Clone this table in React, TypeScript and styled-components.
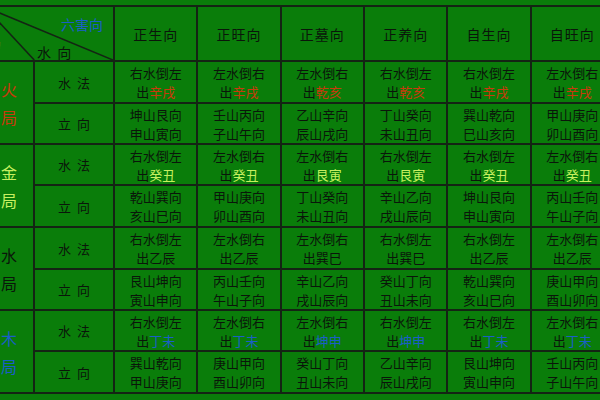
import React from "react";
import styled, { createGlobalStyle } from "styled-components";

type Tone = "fire" | "metal" | "water" | "wood";

type Group = {
  name: [string, string];
  tone: Tone;
  exits: string[];
  mounts: [string, string][];
};

const toneColor: Record<Tone, string> = {
  fire: "#c83a0c",
  metal: "#c8f060",
  water: "#0a160a",
  wood: "#1a5ec8",
};

const heads = ["正生向", "正旺向", "正墓向", "正养向", "自生向", "自旺向"];
const flow = ["右水倒左", "左水倒右", "左水倒右", "右水倒左", "右水倒左", "左水倒右"];

const groups: Group[] = [
  {
    name: ["火", "局"],
    tone: "fire",
    exits: ["辛戌", "辛戌", "乾亥", "乾亥", "辛戌", "辛戌"],
    mounts: [
      ["坤山艮向", "申山寅向"],
      ["壬山丙向", "子山午向"],
      ["乙山辛向", "辰山戌向"],
      ["丁山癸向", "未山丑向"],
      ["巽山乾向", "巳山亥向"],
      ["甲山庚向", "卯山酉向"],
    ],
  },
  {
    name: ["金", "局"],
    tone: "metal",
    exits: ["癸丑", "癸丑", "艮寅", "艮寅", "癸丑", "癸丑"],
    mounts: [
      ["乾山巽向", "亥山巳向"],
      ["甲山庚向", "卯山酉向"],
      ["丁山癸向", "未山丑向"],
      ["辛山乙向", "戌山辰向"],
      ["坤山艮向", "申山寅向"],
      ["丙山壬向", "午山子向"],
    ],
  },
  {
    name: ["水", "局"],
    tone: "water",
    exits: ["乙辰", "乙辰", "巽巳", "巽巳", "乙辰", "乙辰"],
    mounts: [
      ["艮山坤向", "寅山申向"],
      ["丙山壬向", "午山子向"],
      ["辛山乙向", "戌山辰向"],
      ["癸山丁向", "丑山未向"],
      ["乾山巽向", "亥山巳向"],
      ["庚山甲向", "酉山卯向"],
    ],
  },
  {
    name: ["木", "局"],
    tone: "wood",
    exits: ["丁未", "丁未", "坤申", "坤申", "丁未", "丁未"],
    mounts: [
      ["巽山乾向", "甲山庚向"],
      ["庚山甲向", "酉山卯向"],
      ["癸山丁向", "丑山未向"],
      ["乙山辛向", "辰山戌向"],
      ["艮山坤向", "寅山申向"],
      ["壬山丙向", "子山午向"],
    ],
  },
];

const GlobalStyle = createGlobalStyle`
  html, body {
    margin: 0;
    padding: 0;
    width: 600px;
    height: 400px;
    overflow: hidden;
    background: #0a7d0a;
  }
`;

const Page = styled.div`
  width: 600px;
  height: 400px;
  overflow: hidden;
  padding-top: 5px;
  box-sizing: border-box;
  font-family: "Noto Sans CJK SC", "Noto Sans", sans-serif;
`;

const Table = styled.table`
  margin-left: -17px;
  border-collapse: collapse;
  table-layout: fixed;
  width: 630px;
  background: #0a7d0a;
  color: #0a160a;

  td, th {
    border: 2px solid #142414;
    padding: 0;
    text-align: center;
    vertical-align: middle;
    font-weight: normal;
  }
`;

const HeadRow = styled.tr`
  height: 55px;
`;

const BodyRow = styled.tr<{ tall: boolean }>`
  height: ${({ tall }) => (tall ? "42px" : "41px")};
`;

const Corner = styled.th`
  position: relative;
  overflow: hidden;
`;

const Lines = styled.svg`
  position: absolute;
  inset: 0;
  width: 100%;
  height: 100%;
`;

const CornerText = styled.span<{ x: number; y: number; color: string }>`
  position: absolute;
  left: ${({ x }) => x}px;
  top: ${({ y }) => y}px;
  font-size: 14px;
  line-height: 14px;
  color: ${({ color }) => color};
  white-space: pre;
`;

const Head = styled.th`
  font-size: 14px;
  color: #0a160a;
  letter-spacing: 1px;
`;

const GroupName = styled.td<{ tone: Tone }>`
  font-size: 16px;
  line-height: 28px;
  color: ${({ tone }) => toneColor[tone]};
`;

const Kind = styled.td`
  font-size: 13px;
  white-space: pre;
`;

const Cell = styled.td`
  font-size: 13px;
  line-height: 19px;
`;

const Exit = styled.span<{ tone: Tone }>`
  color: ${({ tone }) => toneColor[tone]};
`;

export default function App() {
  return (
    <Page>
      <GlobalStyle />
      <Table>
        <colgroup>
          <col style={{ width: 50 }} />
          <col style={{ width: 80 }} />
          {heads.map((h) => (
            <col key={h} style={{ width: 83.33 }} />
          ))}
        </colgroup>
        <thead>
          <HeadRow>
            <Corner colSpan={2}>
              <Lines viewBox="0 0 130 55" preserveAspectRatio="none">
                <line x1="0" y1="0" x2="130" y2="55" stroke="#142414" strokeWidth="1.6" />
                <line x1="0" y1="0" x2="50" y2="55" stroke="#142414" strokeWidth="1.6" />
              </Lines>
              <CornerText x={76} y={10} color="#1a5ec8">六害向</CornerText>
              <CornerText x={52} y={38} color="#0a160a">水  向</CornerText>
              <CornerText x={2} y={28} color="#c83a0c">局</CornerText>
            </Corner>
            {heads.map((h) => (
              <Head key={h}>{h}</Head>
            ))}
          </HeadRow>
        </thead>
        <tbody>
          {groups.map((g, gi) => (
            <React.Fragment key={g.name[0]}>
              <BodyRow tall={gi % 2 === 0}>
                <GroupName tone={g.tone} rowSpan={2}>
                  {g.name[0]}
                  <br />
                  {g.name[1]}
                </GroupName>
                <Kind>水  法</Kind>
                {flow.map((w, i) => (
                  <Cell key={i}>
                    {w}
                    <br />
                    出<Exit tone={g.tone}>{g.exits[i]}</Exit>
                  </Cell>
                ))}
              </BodyRow>
              <BodyRow tall={gi % 2 === 1}>
                <Kind>立  向</Kind>
                {g.mounts.map((m, i) => (
                  <Cell key={i}>
                    {m[0]}
                    <br />
                    {m[1]}
                  </Cell>
                ))}
              </BodyRow>
            </React.Fragment>
          ))}
        </tbody>
      </Table>
    </Page>
  );
}
